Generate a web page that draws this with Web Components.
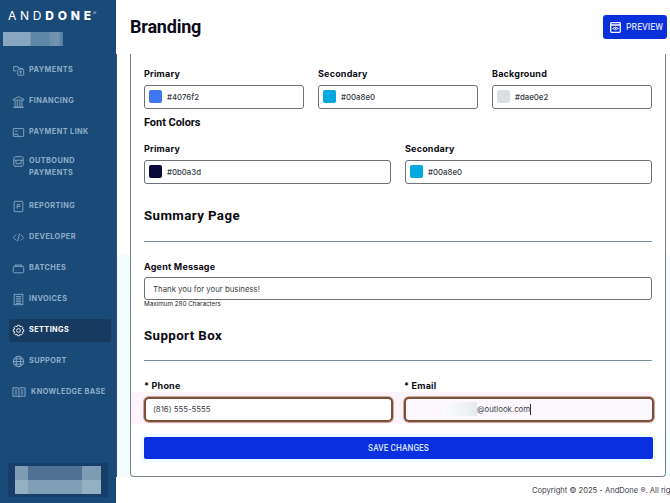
<!DOCTYPE html>
<html lang="en"><head><meta charset="utf-8"><title>Branding</title>
<style>
html,body{margin:0;padding:0;width:670px;height:503px;overflow:hidden;background:#fff}
body{font-family:Inter,"Liberation Sans",sans-serif}
</style></head><body>
<app-shell>
  <side-bar slot="side">
    <nav-item label="PAYMENTS" icon="payments"></nav-item>
    <nav-item label="FINANCING" icon="bank"></nav-item>
    <nav-item label="PAYMENT LINK" icon="link"></nav-item>
    <nav-item label="OUTBOUND PAYMENTS" icon="outbound" tall></nav-item>
    <nav-item label="REPORTING" icon="report"></nav-item>
    <nav-item label="DEVELOPER" icon="code"></nav-item>
    <nav-item label="BATCHES" icon="batch"></nav-item>
    <nav-item label="INVOICES" icon="invoice"></nav-item>
    <nav-item label="SETTINGS" icon="gear" active></nav-item>
    <nav-item label="SUPPORT" icon="globe"></nav-item>
    <nav-item label="KNOWLEDGE BASE" icon="book"></nav-item>
  </side-bar>
  <page-header slot="head" title-text="Branding"></page-header>
  <branding-card slot="main"></branding-card>
  <page-footer slot="foot"></page-footer>
</app-shell>
<script>
const def=(name,html,init)=>customElements.define(name,class extends HTMLElement{
  constructor(){super();this.attachShadow({mode:'open'}).innerHTML=html;}
  connectedCallback(){init&&init(this,this.shadowRoot);}
});
const ICONS={
 payments:'<path d="M2 3h5l1 2h4v1M2 3v5h3"/><rect x="6.500" y="6" width="7" height="7" rx="1"/><path d="M10 7.500v4M8.500 9h3"/>',
 bank:'<path d="M1.500 5 7.500 2l6 3v1h-12zM2 13h11M1.500 14.500h12M3.500 7v5M6 7v5M9 7v5M11.500 7v5"/>',
 link:'<rect x="1.500" y="3" width="12" height="9" rx=".5"/><path d="M1.500 9.500h5l1 2.500"/><path d="M3.500 6h3"/>',
 outbound:'<rect x="2" y="2" width="11" height="11" rx="2"/><path d="M2 6h11M4.500 6v4h6V6M4 13v1M11 13v1"/>',
 report:'<rect x="2.500" y="1.500" width="10" height="12" rx=".8"/><path d="M6 10V5h3v2.500H6"/>',
 code:'<path d="M5 4 1.500 7.500 5 11M10 4l3.500 3.500L10 11M8.700 3 6.300 12"/>',
 batch:'<rect x="1.500" y="5" width="12" height="7.500" rx="1.500"/><path d="M3.500 5V3.500h8V5"/>',
 invoice:'<rect x="2.500" y="1.500" width="10" height="12"/><path d="M4.500 4h6M4.500 6h6M4.500 8h6M4.500 10h6M4.500 12h6"/>',
 gear:'<circle cx="7.500" cy="7.500" r="2.200"/><path d="M6.200 1.500h2.600l.4 1.800 1.600-.9 1.800 1.800-.9 1.600 1.800.4v2.600l-1.800.4.9 1.600-1.800 1.800-1.600-.9-.4 1.800H6.200l-.4-1.800-1.600.9-1.800-1.800.9-1.600-1.800-.4V6.200l1.800-.4-.9-1.600 1.800-1.800 1.600.9z"/>',
 globe:'<circle cx="7.500" cy="7.500" r="6"/><ellipse cx="7.500" cy="7.500" rx="2.600" ry="6"/><path d="M1.500 7.500h12M2.300 4.500h10.400M2.300 10.500h10.400"/>',
 book:'<path d="M1 3h5.500l1 1 1-1H14v9H8.500l-1 1-1-1H1zM7.500 4v9M3 5.500h2.500M3 7.500h2.500M3 9.500h2.500M9.500 5.500H12M9.500 7.500H12M9.500 9.500H12"/>'
};

def('app-shell',`<style>
:host{display:grid;grid-template-columns:116px 1fr;grid-template-rows:54px 423px 1fr;width:670px;height:503px;overflow:hidden;
 background:linear-gradient(180deg,#fff 0,#fff 255px,#f2fdff 255px,#f2fdff 480px,#fff 480px)}
.s{grid-row:1/4;display:block}
</style><div class="s"><slot name="side"></slot></div><slot name="head"></slot><slot name="main"></slot><slot name="foot"></slot>`);

def('side-bar',`<style>
:host{display:flex;flex-direction:column;box-sizing:border-box;width:117px;height:503px;background:#1a4a78;border-right:1px solid #2d4f7c;overflow:hidden}
.logo{display:flex;align-items:flex-start;padding:9px 0 0 8px;height:32px;box-sizing:border-box;color:#fff;font:400 12px/13px Inter,sans-serif;white-space:nowrap}
.logo span{letter-spacing:3.75px}
.logo b{font-weight:800}
.logo em{font-style:normal;letter-spacing:0}
.logo sup{font-size:5px;line-height:8px;color:#b9c9d8;margin:0 0 0 2px;vertical-align:baseline}
.blur{width:60px;height:14px;margin-left:3px;background:linear-gradient(90deg,#88a6bf 0,#88a6bf 27px,#5f87a8 28px,#5f87a8 46px,#6c90ae 47px,#7195b2 55px,#4f7a9f 60px)}
nav{display:flex;flex-direction:column;margin-top:8.500px}
.bottom{margin:auto 0 6px 8px;width:100px;height:34px;box-sizing:border-box;padding:3px 7px;background:#173e68}
.bottom div{height:28px;background:
 linear-gradient(90deg,rgba(165,190,205,.55) 0,rgba(165,190,205,.55) 13px,transparent 13px,transparent 67px,rgba(165,190,205,.55) 67px),
 linear-gradient(180deg,#4f7294 0,#4f7294 14px,#7f9fb7 14px)}
</style>
<div class="logo"><span>AND<b>DON<em>E</em></b></span><sup>®</sup></div>
<div class="blur"></div>
<nav><slot></slot></nav>
<div class="bottom"><div></div></div>`);

def('nav-item',`<style>
:host{display:block;box-sizing:border-box;height:31px;padding:4px 5px 4px 9px}
:host([tall]){height:43px}
.r{display:flex;align-items:center;gap:4px;height:23px;padding-left:3px;border-radius:2px;color:#8eaec8;font:700 7.300px/12px Inter,sans-serif;letter-spacing:.42px}
:host([tall]) .r{height:35px;align-items:flex-start;padding-top:3px;box-sizing:border-box}
:host([active]) .r{background:#173a60;color:#fff}
svg{width:13px;height:13px;flex:none;fill:none;stroke:currentColor;stroke-width:1}
:host([label="KNOWLEDGE BASE"]) .r{gap:5px;white-space:nowrap}
:host([label="KNOWLEDGE BASE"]) svg{width:14px;height:14px}
span{display:block;width:72px}
:host([label="KNOWLEDGE BASE"]) span{width:auto}
</style><div class="r"><svg viewBox="0 0 15 15"></svg><span></span></div>`,(el,sr)=>{
 sr.querySelector('span').textContent=el.getAttribute('label');
 sr.querySelector('svg').innerHTML=ICONS[el.getAttribute('icon')]||'';
});

def('page-header',`<style>
:host{display:flex;align-items:center;justify-content:space-between;box-sizing:border-box;padding:0 3px 0 14px;height:54px;background:#fff}
h1{margin:0;font:700 18px/24px Roboto,sans-serif;letter-spacing:-.2px;color:#0b0a1a}
</style><h1></h1><preview-button></preview-button>`,(el,sr)=>{sr.querySelector('h1').textContent=el.getAttribute('title-text');});

def('preview-button',`<style>
:host{display:block}
button{display:flex;align-items:center;gap:5px;box-sizing:border-box;width:64px;height:24px;padding:0 0 0 7px;border:0;border-radius:3px;background:#0a30dc;color:#d5ddfb;font:500 8.800px/12px Roboto,sans-serif;letter-spacing:0;white-space:nowrap;overflow:hidden}
svg{width:11px;height:11px;flex:none;fill:none;stroke:#fff;stroke-width:1.300}
</style><button><svg viewBox="0 0 11 11"><rect x=".7" y=".7" width="9.600" height="9.600" rx=".8"/><path d="M.7 3h9.600" stroke-width="1.600"/><path d="M2.500 6.500q3-3 6 0q-3 2.500-6 0z" stroke-width=".8"/><circle cx="5.500" cy="6.300" r=".8" fill="#fff" stroke="none"/></svg>PREVIEW</button>`);

def('color-field',`<style>
:host{display:block;min-width:0}
label{display:block;font:700 9px/12px Inter,sans-serif;letter-spacing:.2px;color:#0b0b12;height:12px;margin-bottom:4.500px}
.box{display:flex;align-items:center;gap:5px;box-sizing:border-box;height:24.500px;padding:0 4px;border:1px solid #6d7276;border-radius:3px;background:#fff;font:500 7.800px/12px Inter,sans-serif;color:#333a44}
i{display:block;width:13px;height:13px;border-radius:2px;flex:none}
</style><label></label><div class="box"><i></i><span></span></div>`,(el,sr)=>{
 sr.querySelector('label').textContent=el.getAttribute('label');
 sr.querySelector('span').textContent=el.getAttribute('value');
 sr.querySelector('i').style.background=el.getAttribute('value');
});

def('section-head',`<style>
:host{display:block}
h2{margin:0;font:700 13.300px/18px Roboto,sans-serif;letter-spacing:.4px;color:#0b0b12}
hr{border:0;border-top:1px solid #7b8d99;margin:var(--rule,15.500px) 0 0}
</style><h2><slot></slot></h2><hr>`);

def('text-field',`<style>
:host{display:block;min-width:0}
label{display:block;font:700 9px/12px Inter,sans-serif;letter-spacing:.2px;color:#0b0b12;height:12px;margin-bottom:var(--gap,5px)}
.box{display:flex;align-items:center;box-sizing:border-box;height:var(--h,23px);padding:0 8px;border:1px solid #6d7276;border-radius:3px;background:#fff;font:400 7.800px/12px Inter,sans-serif;color:#3a3f4a;white-space:nowrap}
:host([focus]) .box{border:2px solid #7f4f3c;border-radius:5px;box-shadow:0 0 0 1px #c9a9a0;padding:0 7px}
:host([email]) .box{background:#fdf8fd}
.smudge{display:none;width:34px;height:14px;margin-left:30px;flex:none;background:linear-gradient(90deg,#fbfcfd,#eef2f4 70%,#e4e9ec)}
:host([email]) .smudge{display:block}
.caret{display:none;width:1px;height:11px;background:#333}
:host([email]) .caret{display:inline-block}
</style><label></label><div class="box"><div class="smudge"></div><span></span><i class="caret"></i></div>`,(el,sr)=>{
 sr.querySelector('label').textContent=el.getAttribute('label');
 sr.querySelector('span').textContent=el.getAttribute('value');
});

def('branding-card',`<style>
:host{display:block;box-sizing:border-box;width:536px;height:423px;margin-left:14px;border:1px solid #7a7f84;border-top:0;border-radius:0 0 4px 4px;background:#fff;padding:14px 13px 0}
.c3{display:grid;grid-template-columns:160px 160px 160px;column-gap:14px}
.c2{display:grid;grid-template-columns:247px 247px;column-gap:14px}
h3{margin:6px 0 13px;font:700 11px/15px Roboto,sans-serif;letter-spacing:-.05px;color:#0b0b12}
section-head{margin-top:23px}
.agent{margin-top:19px;--h:23px;--gap:4.500px}
small{display:block;margin-top:0;font:400 6.300px/9px Inter,sans-serif;color:#1d2229}
section-head.sup{margin-top:18px;--rule:15px}
.contact{display:grid;grid-template-columns:249px 250px;column-gap:11px;margin:19px 0 0 -13px;padding:0 0 2px 13px;--h:25px;--gap:4.500px;background:linear-gradient(180deg,transparent 0,transparent 12px,#fdf3fb 12px)}
save-button{margin-top:13px}
</style>
<div class="c3">
 <color-field label="Primary" value="#4076f2"></color-field>
 <color-field label="Secondary" value="#00a8e0"></color-field>
 <color-field label="Background" value="#dae0e2"></color-field>
</div>
<h3>Font Colors</h3>
<div class="c2">
 <color-field label="Primary" value="#0b0a3d"></color-field>
 <color-field label="Secondary" value="#00a8e0"></color-field>
</div>
<section-head>Summary Page</section-head>
<text-field class="agent" label="Agent Message" value="Thank you for your business!"></text-field>
<small>Maximum 280 Characters</small>
<section-head class="sup">Support Box</section-head>
<div class="contact">
 <text-field focus label="* Phone" value="(816) 555-5555"></text-field>
 <text-field focus email label="* Email" value="@outlook.com"></text-field>
</div>
<save-button></save-button>`);

def('save-button',`<style>
:host{display:block}
button{display:block;box-sizing:border-box;width:509px;height:22px;border:0;border-radius:2px;background:#0a2fe0;color:#d9e2fb;font:500 8.200px/12px Roboto,sans-serif;letter-spacing:.1px;box-shadow:0 0 0 4px #f2fdff}
</style><button>SAVE CHANGES</button>`);

def('page-footer',`<style>
:host{display:block;box-sizing:border-box;padding:8px 0 0 416px;white-space:nowrap;overflow:hidden;font:400 7.600px/12px Inter,sans-serif;color:#3c4148;background:#fff}
</style>Copyright © 2025 - AndDone ®. All rights reserved.`);
</script>
</body></html>
